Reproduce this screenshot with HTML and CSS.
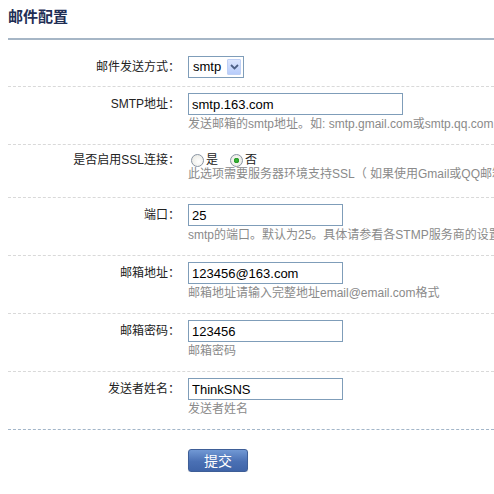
FILE: index.html
```html
<!DOCTYPE html>
<html lang="zh-CN">
<head>
<meta charset="utf-8">
<title>邮件配置</title>
<link rel="stylesheet" href="styles.css">
</head>
<body>
<div class="page">
  <div class="header"><h2 class="title">邮件配置</h2></div>
  <form class="form">
    <div class="row row-first">
      <label class="label">邮件发送方式：</label>
      <div class="field">
        <span class="select">
          <span class="select-value">smtp</span>
          <span class="select-btn">
            <svg width="9" height="6" viewBox="0 0 9 6"><path d="M1 1 L4.5 4.5 L8 1" fill="none" stroke="#4d6185" stroke-width="1.8"/></svg>
          </span>
        </span>
      </div>
    </div>
    <div class="row">
      <label class="label">SMTP地址：</label>
      <div class="field">
        <input class="input input-wide" type="text" value="smtp.163.com">
        <div class="hint">发送邮箱的smtp地址。如: smtp.gmail.com或smtp.qq.com</div>
      </div>
    </div>
    <div class="row row-radio">
      <label class="label">是否启用SSL连接：</label>
      <div class="field">
        <div class="radios">
          <label class="radio-item"><input class="radio" type="radio" name="ssl">是</label>
          <label class="radio-item"><input class="radio" type="radio" name="ssl" checked>否</label>
        </div>
        <div class="hint">此选项需要服务器环境支持SSL（ 如果使用Gmail或QQ邮箱，请打开此选项）</div>
      </div>
    </div>
    <div class="row">
      <label class="label">端口：</label>
      <div class="field">
        <input class="input" type="text" value="25">
        <div class="hint">smtp的端口。默认为25。具体请参看各STMP服务商的设置</div>
      </div>
    </div>
    <div class="row">
      <label class="label">邮箱地址：</label>
      <div class="field">
        <input class="input" type="text" value="123456@163.com">
        <div class="hint">邮箱地址请输入完整地址email@email.com格式</div>
      </div>
    </div>
    <div class="row">
      <label class="label">邮箱密码：</label>
      <div class="field">
        <input class="input" type="text" value="123456">
        <div class="hint">邮箱密码</div>
      </div>
    </div>
    <div class="row row-last">
      <label class="label">发送者姓名：</label>
      <div class="field">
        <input class="input" type="text" value="ThinkSNS">
        <div class="hint">发送者姓名</div>
      </div>
    </div>
    <div class="actions">
      <button class="btn" type="button">提交</button>
    </div>
  </form>
</div>
</body>
</html>
```
FILE: styles.css
```css
html, body {
  margin: 0;
  padding: 0;
  background: #fff;
  overflow: hidden;
}
body {
  font-family: "Liberation Sans", "Noto Sans CJK SC", sans-serif;
  font-size: 12px;
  color: #333;
}
.page {
  padding-left: 8px;
  width: 486px;
  overflow: hidden;
}
.header {
  height: 38px;
  border-bottom: 2px solid #a6b6c6;
}
.title {
  margin: 0;
  font-size: 15px;
  line-height: 33px;
  font-weight: bold;
  color: #1f2e55;
}
.form {
  margin: 10px 0 0;
}
.row {
  display: grid;
  grid-template-columns: 172px 1fr;
  column-gap: 8px;
  padding: 6px 0 12px;
  border-bottom: 1px dashed #d9d9d9;
}
.row-first {
  padding: 6px 0 8px;
}
.row-radio {
  padding: 9px 0 17px;
}
.row-last {
  border-bottom: 1px dashed #a3b6c9;
}
.label {
  text-align: right;
  line-height: 22px;
  color: #222;
  white-space: nowrap;
}
.row-radio .label {
  line-height: 12px;
}
.field {
  min-width: 0;
  white-space: nowrap;
}
.input {
  display: block;
  box-sizing: border-box;
  width: 155px;
  height: 22px;
  margin: 0;
  padding: 0 3px;
  border: 1px solid #7f9db9;
  font-family: "Liberation Sans", "Noto Sans CJK SC", sans-serif;
  font-size: 13px;
  color: #000;
  background: #fff;
  outline: none;
}
.input-wide {
  width: 215px;
}
.hint {
  margin-top: 1px;
  line-height: 16px;
  color: #8a8a8a;
  white-space: nowrap;
}
.row-radio .hint {
  margin-top: 2px;
  line-height: 12px;
}
.select {
  box-sizing: border-box;
  display: inline-flex;
  align-items: center;
  width: 56px;
  height: 22px;
  border: 1px solid #7f9db9;
  background: #fff;
  padding: 2px;
}
.select-value {
  flex: 1;
  padding-left: 2px;
  font-size: 13px;
  color: #000;
  line-height: 16px;
}
.select-btn {
  box-sizing: border-box;
  width: 14px;
  height: 16px;
  display: flex;
  align-items: center;
  justify-content: center;
  border: 1px solid #bfd0f5;
  border-radius: 1px;
  background: linear-gradient(#dce6fd, #b8cdfb);
}
.radios {
  display: flex;
  align-items: center;
  height: 12px;
  padding-left: 3px;
  gap: 12px;
}
.radio-item {
  display: inline-flex;
  align-items: center;
  gap: 2px;
  color: #222;
  line-height: 12px;
}
.radio {
  appearance: none;
  -webkit-appearance: none;
  box-sizing: border-box;
  width: 13px;
  height: 13px;
  margin: 0;
  border: 1px solid #8a95a3;
  border-radius: 50%;
  background: radial-gradient(circle at 60% 60%, #ffffff 0, #e6e6df 100%);
}
.radio:checked {
  background: radial-gradient(circle, #3cbc3c 0, #2a9a2a 2.5px, #f4f4f0 3px, #e6e6df 100%);
}
.actions {
  padding-left: 180px;
  padding-top: 19px;
}
.btn {
  box-sizing: border-box;
  width: 60px;
  height: 23px;
  margin: 0;
  padding: 0;
  border: 1px solid #3e5e97;
  border-radius: 3px;
  background: linear-gradient(#7198d4, #4a70b4 55%, #3f64a8);
  color: #fff;
  font-family: "Liberation Sans", "Noto Sans CJK SC", sans-serif;
  font-size: 14px;
  line-height: 20px;
  box-shadow: 0 1px 1px rgba(0,0,0,0.15);
}
```
